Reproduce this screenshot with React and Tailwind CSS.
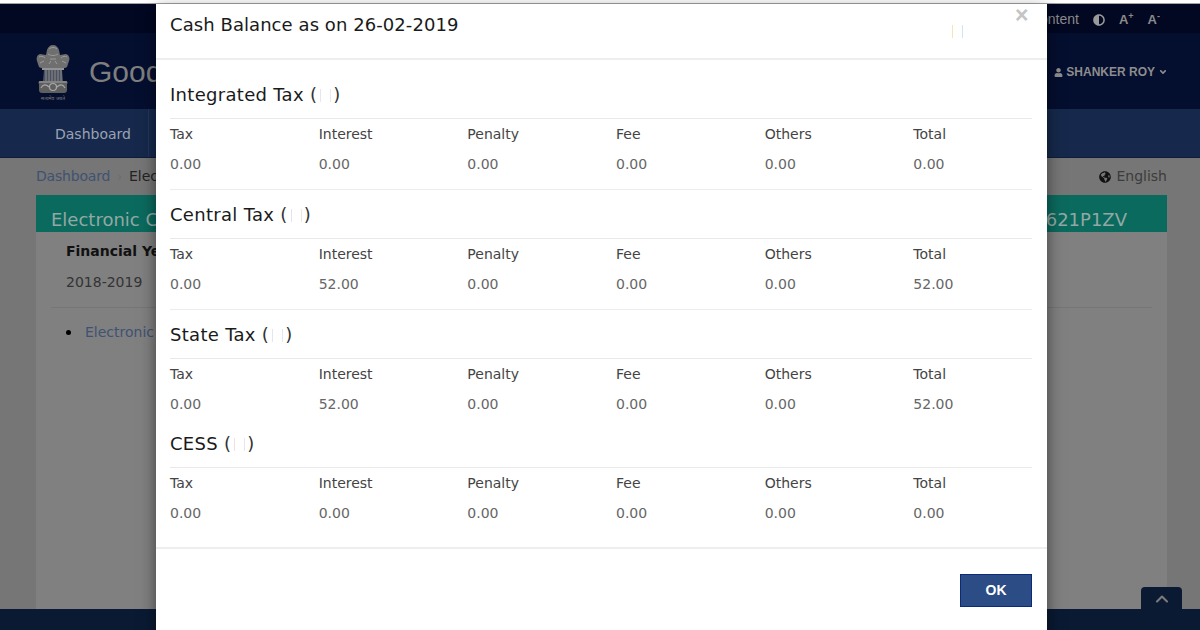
import { ChevronUp } from 'lucide-react';
import { FaAdjust, FaAngleDown, FaGlobeAmericas, FaUser } from 'react-icons/fa';

const LABELS = ['Tax', 'Interest', 'Penalty', 'Fee', 'Others', 'Total'];

const SECTIONS = [
    { name: 'Integrated Tax', values: ['0.00', '0.00', '0.00', '0.00', '0.00', '0.00'], divider: true, left: 'bg-[#e6e6ec]', right: 'bg-[#efe6e6]' },
    { name: 'Central Tax', values: ['0.00', '52.00', '0.00', '0.00', '0.00', '52.00'], divider: true, left: 'bg-[#dfe4f0]', right: 'bg-[#f0e4dc]' },
    { name: 'State Tax', values: ['0.00', '52.00', '0.00', '0.00', '0.00', '52.00'], divider: false, left: 'bg-[#e2e6ee]', right: 'bg-[#dfe6f2]' },
    { name: 'CESS', values: ['0.00', '0.00', '0.00', '0.00', '0.00', '0.00'], divider: false, left: 'bg-[#f4dede]', right: 'bg-[#e6e6ee]' },
];

// the rupee glyph did not load in the original, it shows up as two pale bars
const MissingGlyph = ({ left, right }) => (
    <span className="inline-flex items-center gap-[9px] ml-[3px] mr-[2px] h-[13px] align-[-1px]">
        <span className={`w-[1px] h-[13px] ${left}`}></span>
        <span className={`w-[1px] h-[13px] ${right}`}></span>
    </span>
);

const Emblem = () => (
    <svg width="36" height="50" viewBox="0 0 36 50" fill="#6f6f6f">
        {/* lions */}
        <path d="M12 5c1-3 3-5 6-5s5 2 6 5l1 5 6-1c3 1 4 4 3 7l-2 6-2 1H6l-2-1-2-6c-1-3 0-6 3-7l6 1z" />
        <path d="M14 4c2-2 6-2 8 0M13 9c3 2 7 2 10 0M15 14h6M4 12c2-1 4-1 6 1M26 13c2-2 4-2 6-1M5 18l4-2M31 18l-4-2M14 19l2-3M22 19l-2-3" fill="none" stroke="#9b9b9b" strokeWidth="1" />
        {/* abacus band */}
        <rect x="7" y="23" width="22" height="2" fill="#939393" />
        {/* body */}
        <path d="M9 25h18l1 11H8z" fill="#4c5160" />
        <path d="M11 25v11M14 25v11M17 25v11M20 25v11M23 25v11M26 25v11" stroke="#8d8d8d" strokeWidth="1" />
        {/* base */}
        <path d="M5 36h26c2 1 2 2 1 3v6c0 2-1 3-3 3H7c-2 0-3-1-3-3v-6c-1-1-1-2 1-3z" fill="#5f5f5f" />
        <circle cx="18" cy="42" r="3.5" fill="none" stroke="#a8a8a8" strokeWidth="1.2" />
        <path d="M6 43c2-4 5-4 8-1M22 42c3-3 6-3 8 1M4 37h28" fill="none" stroke="#a8a8a8" strokeWidth="1.1" />
    </svg>
);

const TaxSection = ({ section }) => (
    <div>
        <div className="ml-[14px] mr-[15px] h-[49px] flex items-center border-b border-[#e9e9e9] text-[18px] tracking-[0.3px] text-[#1a1a1a]">
            <span>
                {section.name} <span className="text-[#333]">(<MissingGlyph left={section.left} right={section.right} />)</span>
            </span>
        </div>
        <div className="w-[892px] grid grid-cols-6 text-[14px]">
            {LABELS.map((label) => (
                <div key={label} className="pl-[14px] h-[30px] flex items-center text-[#444]">{label}</div>
            ))}
            {section.values.map((value, i) => (
                <div key={i} className="pl-[14px] h-[30px] flex items-center text-[#666]">{value}</div>
            ))}
        </div>
        {section.divider && <div className="mt-[10px] ml-[14px] mr-[15px] h-[1px] bg-[#ececec]"></div>}
    </div>
);

const App = () => {
    return (
        <div className="relative w-[1200px] h-[630px] overflow-hidden flex flex-col bg-[#767676] font-['DejaVu_Sans',sans-serif]">
            <div className="h-[3px] bg-white shrink-0"></div>
            <div className="h-[1px] bg-[#a3a3a3] shrink-0"></div>

            {/* top strip */}
            <div className="h-[29px] shrink-0 bg-[#020722] flex items-center justify-end pr-[38px] pt-[2px] text-[#8a8a8a] text-[13px] font-['Liberation_Sans',sans-serif]">
                <span className="text-[14px] mr-[14px]">Skip to Main Content</span>
                <FaAdjust className="text-[12px] text-[#9a9a9a] mr-[14px]" />
                <span className="font-bold mr-[14px]">A<sup className="text-[9px]">+</sup></span>
                <span className="font-bold mr-[2px]">A<sup className="text-[9px]">-</sup></span>
            </div>

            {/* header */}
            <div className="h-[76px] shrink-0 bg-[#040e2f] flex items-center justify-between pl-[35px] pr-[32px]">
                <div className="flex items-center gap-[18px]">
                    <div className="flex flex-col items-center mt-[4px]">
                        <Emblem />
                        <span className="text-[5px] leading-[6px] text-[#7d7d7d] font-['Noto_Sans',sans-serif]">सत्यमेव जयते</span>
                    </div>
                    <span className="text-[30px] text-[#7f7f7f] font-['Liberation_Sans',sans-serif]">Goods and Services Tax</span>
                </div>
                <div className="flex items-center gap-[3px] pt-[2px] text-[12px] font-bold text-[#8d8d8d] font-['Liberation_Sans',sans-serif]">
                    <FaUser className="text-[9px]" />
                    <span>SHANKER ROY</span>
                    <FaAngleDown className="text-[10px]" />
                </div>
            </div>

            {/* nav */}
            <div className="h-[49px] shrink-0 bg-[#16294c] flex border-b border-[#0f1d38]">
                <div className="w-[149px] pl-[55px] pt-[2px] flex items-center border-r border-[#22355a] text-[14px] text-[#9aa3b3]">Dashboard</div>
            </div>

            {/* main */}
            <div className="flex-1 min-h-0 pl-[36px] pr-[33px]">
                <div className="h-[37px] flex items-center justify-between text-[14px]">
                    <div className="flex items-center">
                        <span className="text-[#3f5272] tracking-[-0.2px]">Dashboard</span>
                        <span className="text-[#6c6c6c] mx-[7px] text-[12px]">›</span>
                        <span className="text-[#222]">Electronic Cash Ledger</span>
                    </div>
                    <div className="flex items-center gap-[5px] text-[#3c3c3c]">
                        <FaGlobeAmericas className="text-[12px] text-[#111]" />
                        <span>English</span>
                    </div>
                </div>
                <div className="h-[414px] bg-[#808080]">
                    <div className="h-[37px] bg-[#0b6a5e] flex justify-between pl-[15px] pr-[40px] pt-[13px] text-[18px] leading-[24px] text-[#93a8a4]">
                        <span>Electronic Cash Ledger</span>
                        <span>GSTIN 19AAAAA1621P1ZV</span>
                    </div>
                    <div className="px-[15px]">
                        <div className="h-[76px] pl-[15px] border-b border-[#767676] text-[14px]">
                            <div className="h-[39px] flex items-center font-bold text-[#111]">Financial Year</div>
                            <div className="h-[22px] flex items-center text-[#333]">2018-2019</div>
                        </div>
                        <div className="mt-[14px] pl-[15px] flex items-center gap-[14px] text-[14px] text-[#3f5272]">
                            <span className="w-[5px] h-[5px] rounded-full bg-black"></span>
                            <span>Electronic Cash Ledger</span>
                        </div>
                    </div>
                </div>
            </div>

            {/* footer */}
            <div className="h-[21px] shrink-0 bg-[#0a1a33]"></div>

            {/* back to top */}
            <div className="absolute left-[1141px] top-[587px] w-[41px] h-[23px] rounded-t-[4px] bg-[#0a1a33] flex items-center justify-center">
                <ChevronUp size={20} strokeWidth={2.5} className="text-[#7b7b7b]" />
            </div>

            {/* modal */}
            <div className="absolute left-[156px] top-[4px] w-[891px] h-[640px] bg-white shadow-[0_5px_15px_rgba(0,0,0,0.5)]">
                <div className="relative h-[56px] pl-[14px] pt-[9px] border-b-2 border-[#eeeeee] text-[18px] leading-[24px] tracking-[0.07px] text-[#1a1a1a]">
                    Cash Balance as on 26-02-2019
                    <span className="absolute left-[793px] top-[15px]">
                        <MissingGlyph left="bg-[#f0e6b8]" right="bg-[#cfe4f5]" />
                    </span>
                    <span className="absolute left-[859px] top-[-2px] leading-[26px] text-[23px] font-bold text-[#c4c4c4] font-['Liberation_Sans',sans-serif]">×</span>
                </div>
                <div className="pt-[10px] pb-[19px] border-b-2 border-[#eeeeee]">
                    {SECTIONS.map((section) => (
                        <TaxSection key={section.name} section={section} />
                    ))}
                </div>
                <div className="flex justify-end pt-[25px] pr-[15px]">
                    <button className="w-[72px] h-[33px] bg-[#2c4c85] border border-[#0c2a7a] text-white text-[14px] font-bold font-['Liberation_Sans',sans-serif]">OK</button>
                </div>
            </div>
        </div>
    );
};

export default App;
